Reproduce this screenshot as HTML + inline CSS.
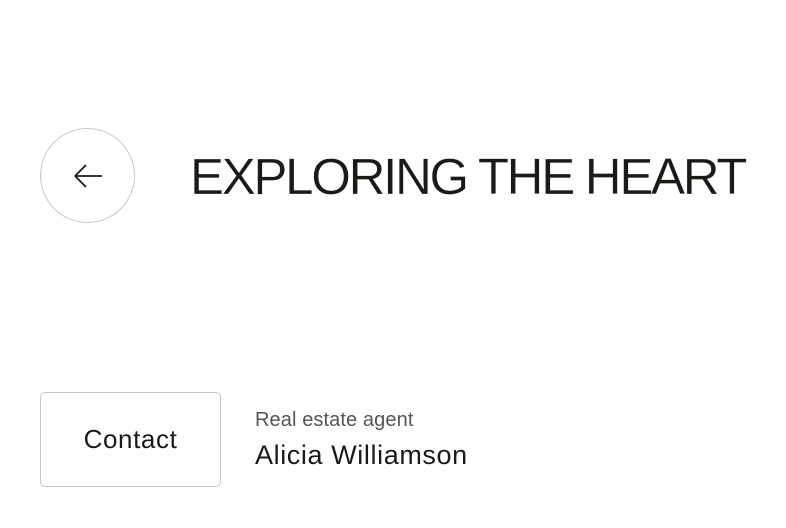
<!DOCTYPE html>
<html><head><style>
body{margin:0;width:786px;height:528px;background:#fff;font-family:"Liberation Sans",sans-serif;color:#1c1a17;position:relative;overflow:hidden}
.circ{position:absolute;left:40px;top:128px;width:93px;height:93px;border:1.5px solid #c8c8c8;border-radius:50%}
.title{position:absolute;left:190px;top:147px;font-size:51px;line-height:60px;letter-spacing:-2.3px;white-space:nowrap;-webkit-text-stroke:0.3px #fff}
.btn{position:absolute;left:40px;top:392px;width:179px;height:93px;border:1.5px solid #c8c8c8;border-radius:5px;box-sizing:content-box;display:flex;align-items:center;justify-content:center;font-size:26px;letter-spacing:0.6px}
.role{position:absolute;left:255px;top:409px;font-size:20px;color:#555;letter-spacing:0.1px}
.name{position:absolute;left:255px;top:440px;font-size:27px;letter-spacing:0.6px}
</style></head><body>
<div class="circ"></div>
<svg style="position:absolute;left:60px;top:150px" width="60" height="50" viewBox="0 0 60 50"><path d="M15 26H42M15 26L26 15M15 26L26 37" stroke="#1c1a17" stroke-width="1.8" fill="none"/></svg>
<div class="title">EXPLORING THE HEART</div>
<div class="btn">Contact</div>
<div class="role">Real estate agent</div>
<div class="name">Alicia Williamson</div>
</body></html>
